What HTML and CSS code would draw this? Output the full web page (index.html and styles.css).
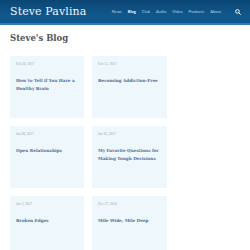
FILE: index.html
```html
<!DOCTYPE html>
<html lang="en">

<head>
    <meta charset="UTF-8">
    <meta name="viewport" content="width=device-width, initial-scale=1.0">
    <title>Steve's Blog</title>
    <link rel="stylesheet" href="styles.css">
</head>

<body>
    <header class="top-bar">
        <div class="logo">Steve Pavlina</div>
        <nav class="nav">
            <a href="#">News</a>
            <a href="#" class="active">Blog</a>
            <a href="#">Club</a>
            <a href="#">Audio</a>
            <a href="#">Video</a>
            <a href="#">Products</a>
            <a href="#">About</a>
        </nav>
        <svg class="search" width="6" height="6" viewBox="0 0 16 16" fill="none" stroke="#ffffff" stroke-width="2.6">
            <circle cx="6.5" cy="6.5" r="4.8" />
            <path d="M10 10 14.5 14.5" stroke-linecap="round" />
        </svg>
    </header>

    <main class="content">
        <h1 class="page-title">Steve's Blog</h1>
        <div class="grid">
            <div class="card">
                <div class="date">Feb 20, 2017</div>
                <div class="title">How to Tell if You Have a Healthy Brain</div>
            </div>
            <div class="card">
                <div class="date">Feb 15, 2017</div>
                <div class="title">Becoming Addiction-Free</div>
            </div>
            <div class="card">
                <div class="date">Jan 30, 2017</div>
                <div class="title">Open Relationships</div>
            </div>
            <div class="card">
                <div class="date">Jan 16, 2017</div>
                <div class="title">My Favorite Questions for Making Tough Decisions</div>
            </div>
            <div class="card">
                <div class="date">Jan 3, 2017</div>
                <div class="title">Broken Edges</div>
            </div>
            <div class="card">
                <div class="date">Dec 27, 2016</div>
                <div class="title">Mile Wide, Mile Deep</div>
            </div>
        </div>
    </main>
</body>

</html>
```

FILE: styles.css
```css
* {
    box-sizing: border-box;
}

body {
    margin: 0;
    background-color: #ffffff;
    font-family: "Liberation Serif", serif;
}

.top-bar {
    height: 25px;
    display: flex;
    align-items: center;
    padding: 0 9px 0 10px;
    background: linear-gradient(180deg, #0b4674 0%, #0f568a 60%, #11598c 100%);
    border-bottom: 2px solid #2b7fae;
}

.logo {
    font-family: "DejaVu Serif", serif;
    font-size: 11px;
    color: #f2f6fa;
    letter-spacing: 0.1px;
    margin-top: -1px;
}

.nav {
    display: flex;
    gap: 6px;
    margin-left: auto;
    margin-right: 14px;
}

.nav a {
    font-family: "Lato", sans-serif;
    font-size: 4px;
    color: #b9d2e6;
    text-decoration: none;
}

.nav a.active {
    color: #ffffff;
    font-weight: bold;
}

.search {
    display: block;
}

.content {
    padding: 0 10px;
}

.page-title {
    margin: 8px 0 13px;
    font-family: "DejaVu Serif", serif;
    font-size: 8.5px;
    font-weight: bold;
    color: #555555;
}

.grid {
    display: grid;
    grid-template-columns: 74px 75px;
    grid-auto-rows: 62px;
    gap: 8px;
}

.card {
    background-color: #eef7fb;
    padding: 6px 7px 6px 6px;
}

.date {
    font-size: 3.5px;
    color: #9aa3aa;
}

.title {
    margin-top: 11px;
    font-family: "DejaVu Serif", serif;
    font-size: 4.2px;
    line-height: 8px;
    font-weight: bold;
    color: #4d6f98;
}
```
